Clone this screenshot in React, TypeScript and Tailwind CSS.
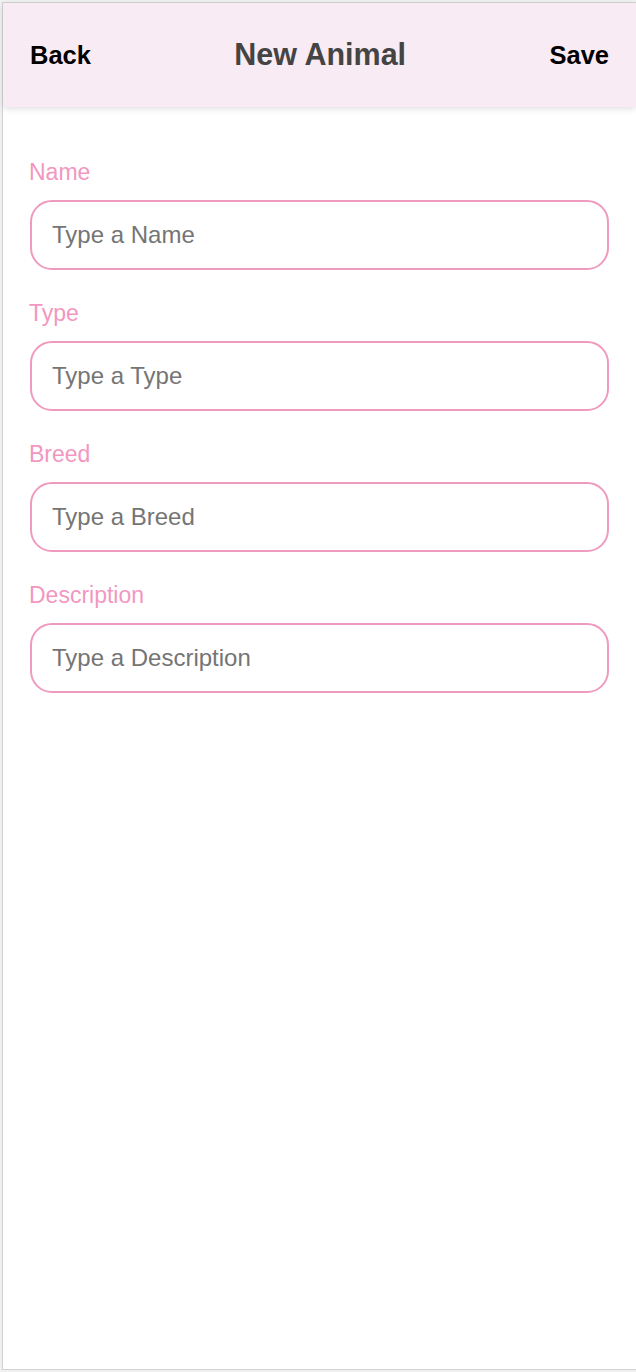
const fields = [
  { label: "Name", placeholder: "Type a Name" },
  { label: "Type", placeholder: "Type a Type" },
  { label: "Breed", placeholder: "Type a Breed" },
  { label: "Description", placeholder: "Type a Description" },
];

const App = () => {
  return (
    <div
      className="w-[636px] h-[1372px] bg-[#f0f0f0] pt-[2px] pl-[2px] pb-[2px] overflow-hidden"
      style={{ fontFamily: '"Liberation Sans", Arial, sans-serif' }}
    >
      <div className="h-full bg-white border-l border-t border-b border-[#d2d2d2] flex flex-col">
        <header className="h-[104px] shrink-0 bg-[#f9ebf3] shadow-[0_2px_6px_rgba(0,0,0,0.12)] px-[27px] flex items-center justify-between relative z-10">
          <button className="text-[25.5px] font-bold text-black">Back</button>
          <h1 className="text-[30.5px] font-bold text-[#444444]">New Animal</h1>
          <button className="text-[25.5px] font-bold text-black">Save</button>
        </header>

        <main className="px-[27px] pt-[51px] flex flex-col gap-[29px]">
          {fields.map((f) => (
            <div key={f.label} className="flex flex-col gap-[14px]">
              <label className="text-[23px] leading-[28px] text-[#f297bf] -ml-[1px]">{f.label}</label>
              <input
                type="text"
                placeholder={f.placeholder}
                className="h-[70px] w-full rounded-[22px] border-2 border-[#f09abf] pl-[20px] text-[24px] outline-none placeholder:text-[#757575]"
              />
            </div>
          ))}
        </main>
      </div>
    </div>
  );
};

export default App;
